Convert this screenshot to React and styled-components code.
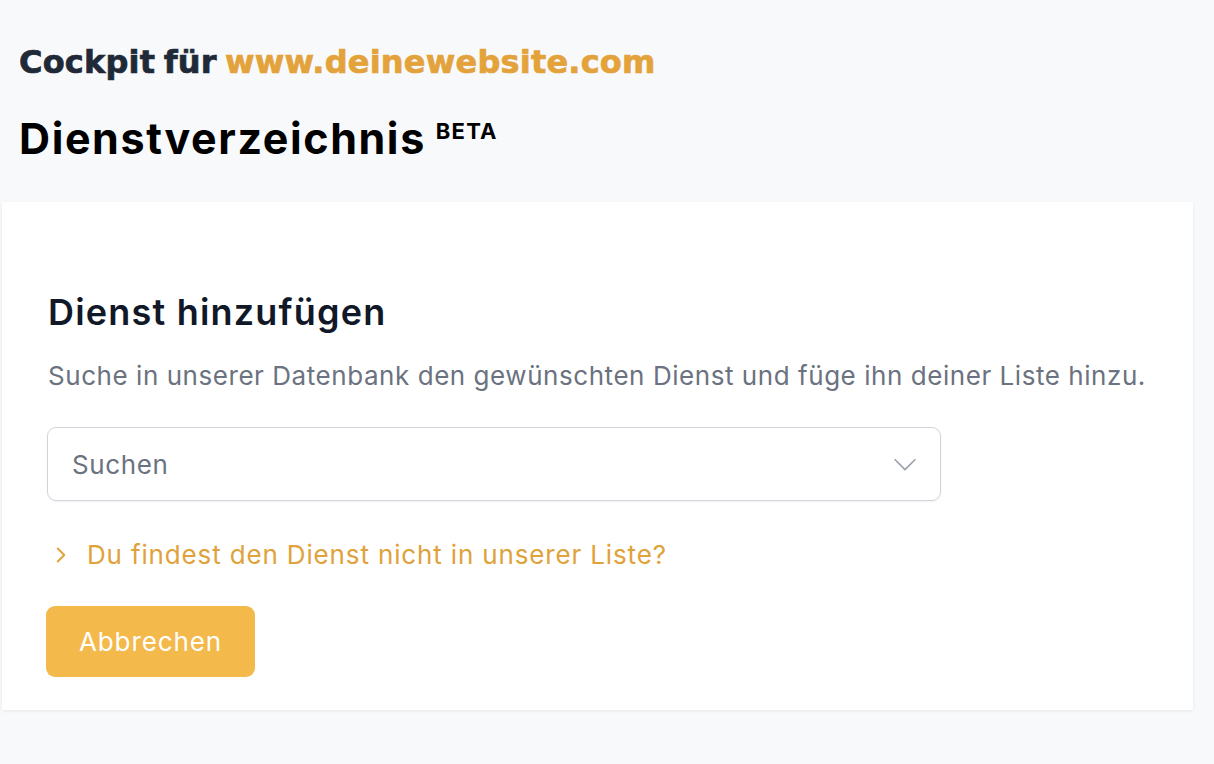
import React from 'react';
import styled, { createGlobalStyle } from 'styled-components';

const GlobalStyle = createGlobalStyle`
  html, body {
    margin: 0;
    padding: 0;
    background: #f8f9fb;
    font-family: Inter, "Noto Sans", sans-serif;
    -webkit-font-smoothing: antialiased;
  }
`;

const Page = styled.div`
  min-height: 764px;
  padding: 40px 21px 0 2px;
  box-sizing: border-box;
`;

const Header = styled.header`
  padding-left: 17px;
  margin-bottom: 39px;
`;

const Cockpit = styled.h2`
  margin: 0;
  font-family: "DejaVu Sans", Inter, sans-serif;
  font-size: 32px;
  font-weight: 700;
  letter-spacing: 0.2px;
  word-spacing: -3px;
  line-height: 44px;
  color: #1f2937;
  -webkit-text-stroke: 0.7px currentColor;
`;

const Domain = styled.span`
  color: #e3a23a;
`;

const Title = styled.h1`
  margin: 22px 0 0;
  font-size: 43px;
  font-weight: 700;
  letter-spacing: 1.6px;
  line-height: 50px;
  color: #000;
`;

const Beta = styled.sup`
  font-size: 22px;
  font-weight: 700;
  letter-spacing: 1.2px;
  margin-left: 10px;
  vertical-align: 15px;
`;

const Card = styled.section`
  background: #fff;
  box-shadow: 0 1px 3px rgba(15, 23, 42, 0.08);
  padding: 88px 44px 33px;
`;

const CardTitle = styled.h3`
  margin: 0;
  font-size: 36px;
  font-weight: 600;
  letter-spacing: 1.2px;
  line-height: 44px;
  color: #111827;
  padding-left: 2px;
`;

const Lead = styled.p`
  margin: 24px 0 0 2px;
  font-size: 26px;
  letter-spacing: 0.55px;
  line-height: 36px;
  color: #6b7280;
`;

const Select = styled.div`
  display: flex;
  align-items: center;
  justify-content: space-between;
  width: 894px;
  height: 74px;
  margin: 33px 0 0 1px;
  box-sizing: border-box;
  padding: 0 18px 0 24px;
  border: 1.5px solid #d1d5db;
  border-radius: 9px;
  box-shadow: 0 1px 2px rgba(0, 0, 0, 0.05);
`;

const Placeholder = styled.span`
  font-size: 26px;
  letter-spacing: 0.6px;
  color: #6b7280;
`;

const Disclosure = styled.div`
  display: flex;
  align-items: center;
  gap: 13px;
  margin: 38px 0 0 2px;
  font-size: 26px;
  letter-spacing: 0.85px;
  line-height: 32px;
  color: #e0a23a;
`;

const Button = styled.button`
  margin-top: 35px;
  width: 209px;
  height: 71px;
  border: none;
  border-radius: 9px;
  background: #f4b94b;
  color: #fff;
  font-family: inherit;
  font-size: 26px;
  font-weight: 400;
  letter-spacing: 0.9px;
`;

const Chevron = ({ dir = 'down', size = 24, color, stroke = 1.6 }) => (
  <svg width={size} height={size} viewBox="0 0 24 24" fill="none" stroke={color} strokeWidth={stroke} strokeLinecap="round" strokeLinejoin="round">
    {dir === 'down' ? <path d="M5 9l7 7 7-7" /> : <path d="M9 6l6 6-6 6" />}
  </svg>
);

export default function App() {
  return (
    <Page>
      <GlobalStyle />
      <Header>
        <Cockpit>
          Cockpit für <Domain>www.deinewebsite.com</Domain>
        </Cockpit>
        <Title>
          Dienstverzeichnis<Beta>BETA</Beta>
        </Title>
      </Header>
      <Card>
        <CardTitle>Dienst hinzufügen</CardTitle>
        <Lead>Suche in unserer Datenbank den gewünschten Dienst und füge ihn deiner Liste hinzu.</Lead>
        <Select>
          <Placeholder>Suchen</Placeholder>
          <Chevron dir="down" size={34} color="#9ca3af" stroke={1.2} />
        </Select>
        <Disclosure>
          <Chevron dir="right" size={26} color="#e0a23a" stroke={1.8} />
          Du findest den Dienst nicht in unserer Liste?
        </Disclosure>
        <Button>Abbrechen</Button>
      </Card>
    </Page>
  );
}
